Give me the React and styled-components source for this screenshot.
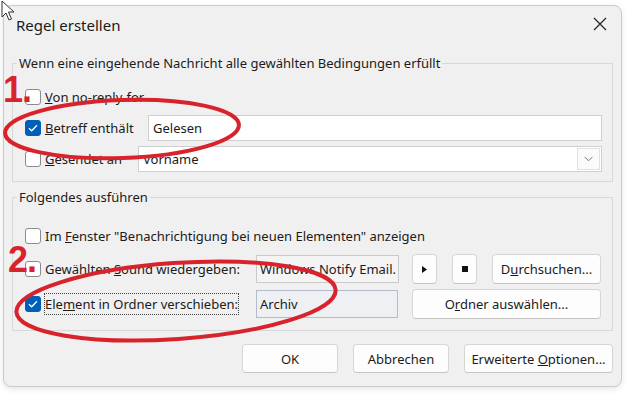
import React from "react";
import styled, { createGlobalStyle } from "styled-components";

const Global = createGlobalStyle`
  html, body {
    margin: 0;
    padding: 0;
    background: #ffffff;
  }
  body {
    font-family: "Noto Sans", "Open Sans", "Liberation Sans", sans-serif;
    color: #1b1b1b;
  }
`;

const Page = styled.div`
  position: relative;
  width: 627px;
  height: 394px;
  box-sizing: border-box;
  padding: 5px 5px 0 3px;
  overflow: hidden;
  background: #ffffff;
`;

const Dialog = styled.div`
  width: 619px;
  height: 382px;
  box-sizing: border-box;
  display: flex;
  flex-direction: column;
  padding: 0 8px;
  background: #f0f0f0;
  border: 1px solid #cbcbcb;
  border-radius: 8px;
  box-shadow: 0 2px 6px rgba(0, 0, 0, 0.1);
`;

const TitleBar = styled.div`
  height: 48px;
  flex: 0 0 48px;
  box-sizing: border-box;
  display: flex;
  align-items: flex-start;
  justify-content: space-between;
  padding: 9px 6px 0 4px;
`;

const Title = styled.div`
  font-size: 15px;
  line-height: 20px;
  color: #1a1a1a;
`;

const Close = styled.button`
  width: 14px;
  height: 14px;
  margin-top: 2px;
  padding: 0;
  border: 0;
  background: transparent;
  display: flex;
`;

const Group = styled.fieldset`
  margin: ${(p) => p.$mt || 0}px 0 0 0;
  min-width: 0;
  border: 1px solid #d8d8d8;
  padding: ${(p) => p.$pad};
  display: flex;
  flex-direction: column;
  gap: 5px;
`;

const Caption = styled.legend`
  padding: 0 2px;
  margin-left: -8px;
  font-size: 13px;
  line-height: 18px;
  color: #1b1b1b;
`;

const Row = styled.div`
  display: flex;
  align-items: center;
  height: ${(p) => p.$h || 26}px;
`;

const Option = styled.label`
  display: flex;
  align-items: center;
  gap: 4px;
  flex: 0 0 ${(p) => (p.$w ? `${p.$w}px` : "auto")};
  font-size: 13px;
  line-height: 18px;
  color: #1b1b1b;
  white-space: nowrap;
`;

const Box = styled.span`
  width: 16px;
  height: 16px;
  flex: 0 0 16px;
  box-sizing: border-box;
  border-radius: 3px;
  border: 1px solid ${(p) => (p.$on ? "#005fb8" : "#8b8b8b")};
  background: ${(p) => (p.$on ? "#005fb8" : "#ffffff")};
  display: flex;
  align-items: center;
  justify-content: center;
`;

const Focus = styled.span`
  margin-left: -1px;
  padding: 1px 0 1px 0;
  border: 1px dotted #444;
`;

const Field = styled.div`
  box-sizing: border-box;
  width: ${(p) => p.$w}px;
  height: ${(p) => p.$h || 26}px;
  display: flex;
  align-items: center;
  padding-left: ${(p) => p.$pl || 3}px;
  background: ${(p) => p.$bg || "#ffffff"};
  border: 1px solid ${(p) => p.$bc || "#cfcfcf"};
  font-size: 13px;
  color: #1b1b1b;
  white-space: nowrap;
  overflow: hidden;
`;

const ComboText = styled.span`
  flex: 1;
`;

const DropButton = styled.span`
  width: 23px;
  height: 22px;
  margin-right: 1px;
  box-sizing: border-box;
  border: 1px solid #e1e1e1;
  background: #fbfbfb;
  display: flex;
  align-items: center;
  justify-content: center;
`;

const Button = styled.button`
  box-sizing: border-box;
  width: ${(p) => p.$w}px;
  height: ${(p) => p.$h || 30}px;
  margin-left: ${(p) => p.$ml || 0}px;
  padding: 0;
  display: flex;
  align-items: center;
  justify-content: center;
  background: #fdfdfd;
  border: 1px solid #d6d6d6;
  border-bottom-color: #c4c4c4;
  border-radius: 4px;
  font-family: inherit;
  font-size: 13px;
  color: #1b1b1b;
  white-space: nowrap;
`;

const Footer = styled.div`
  margin-top: 13px;
  display: flex;
  justify-content: flex-end;
  gap: 15px;
`;

const Marker = styled.span`
  position: absolute;
  left: ${(p) => p.$x}px;
  top: ${(p) => p.$y}px;
  font-family: "Liberation Sans", Arial, sans-serif;
  font-weight: 700;
  font-size: 36px;
  line-height: 36px;
  color: #d9232c;
  letter-spacing: -1px;
`;

const Overlay = styled.svg`
  position: absolute;
  left: 0;
  top: 0;
  pointer-events: none;
`;

const Check = () => (
  <svg width="10" height="8" viewBox="0 0 10 8">
    <path d="M1 4.2 L3.7 6.8 L9 1.2" fill="none" stroke="#fff" strokeWidth="1.3" />
  </svg>
);

const CheckOption = ({ on, w, children }) => (
  <Option $w={w}>
    <Box $on={on}>{on && <Check />}</Box>
    {children}
  </Option>
);

export default function App() {
  return (
    <Page>
      <Global />
      <Dialog>
        <TitleBar>
          <Title>Regel erstellen</Title>
          <Close aria-label="Schließen">
            <svg width="14" height="14" viewBox="0 0 14 14">
              <path d="M1 1 L13 13 M13 1 L1 13" stroke="#222" strokeWidth="1.2" />
            </svg>
          </Close>
        </TitleBar>

        <Group $pad="12px 10px 9px 12px">
          <Caption>Wenn eine eingehende Nachricht alle gewählten Bedingungen erfüllt</Caption>
          <Row>
            <CheckOption>
              <span>
                <u>V</u>on no-reply-for
              </span>
            </CheckOption>
          </Row>
          <Row>
            <CheckOption on w={123}>
              <span>
                <u>B</u>etreff enthält
              </span>
            </CheckOption>
            <Field $w={454} $pl={4}>
              Gelesen
            </Field>
          </Row>
          <Row>
            <CheckOption w={113}>
              <span>
                <u>G</u>esendet an
              </span>
            </CheckOption>
            <Field $w={464} $pl={4}>
              <ComboText>Vorname</ComboText>
              <DropButton>
                <svg width="9" height="6" viewBox="0 0 9 6">
                  <path d="M0.5 0.8 L4.5 4.8 L8.5 0.8" fill="none" stroke="#777" strokeWidth="1" />
                </svg>
              </DropButton>
            </Field>
          </Row>
        </Group>

        <Group $mt={6} $pad="17px 11px 11px 12px">
          <Caption>Folgendes ausführen</Caption>
          <Row>
            <CheckOption>
              <span>
                Im <u>F</u>enster "Benachrichtigung bei neuen Elementen" anzeigen
              </span>
            </CheckOption>
          </Row>
          <Row $h={30}>
            <CheckOption w={231}>
              <span>
                Gewählten <u>S</u>ound wiedergeben:
              </span>
            </CheckOption>
            <Field $w={143} $h={28} $bg="#f4f4f4" $bc="#cacaca">
              Windows Notify Email.
            </Field>
            <Button $w={25} $ml={13} aria-label="Wiedergabe">
              <svg width="5" height="7" viewBox="0 0 5 7">
                <path d="M0 0 L5 3.5 L0 7 Z" fill="#111" />
              </svg>
            </Button>
            <Button $w={25} $ml={15} aria-label="Stopp">
              <svg width="6" height="6" viewBox="0 0 6 6">
                <rect width="6" height="6" fill="#111" />
              </svg>
            </Button>
            <Button $w={109} $ml={15}>
              <span>
                D<u>u</u>rchsuchen...
              </span>
            </Button>
          </Row>
          <Row $h={30}>
            <CheckOption on w={231}>
              <Focus>
                Ele<u>m</u>ent in Ordner verschieben:
              </Focus>
            </CheckOption>
            <Field $w={142} $h={28} $bg="#eef0f3" $bc="#b3bccb">
              Archiv
            </Field>
            <Button $w={189} $ml={14}>
              <span>
                O<u>r</u>dner auswählen...
              </span>
            </Button>
          </Row>
        </Group>

        <Footer>
          <Button $w={96} $h={29}>
            <span>OK</span>
          </Button>
          <Button $w={96} $h={29}>
            <span>Abbrechen</span>
          </Button>
          <Button $w={149} $h={29}>
            <span>
              Erweiterte <u>O</u>ptionen...
            </span>
          </Button>
        </Footer>
      </Dialog>

      <Overlay width="627" height="394" viewBox="0 0 627 394">
        <ellipse
          cx="122"
          cy="129"
          rx="117"
          ry="29"
          transform="rotate(-2 122 129)"
          fill="none"
          stroke="#d9232c"
          strokeWidth="4"
        />
        <ellipse
          cx="176"
          cy="301"
          rx="160"
          ry="38"
          transform="rotate(-4 176 301)"
          fill="none"
          stroke="#d9232c"
          strokeWidth="4"
        />
        <path
          d="M2 1 L2 17 L6 13 L9 20 L11.5 19 L8.5 12 L14 12 Z"
          fill="#fff"
          stroke="#333"
          strokeWidth="1"
          strokeLinejoin="round"
        />
      </Overlay>
      <Marker $x={3} $y={72}>1.</Marker>
      <Marker $x={8} $y={242}>2.</Marker>
    </Page>
  );
}
